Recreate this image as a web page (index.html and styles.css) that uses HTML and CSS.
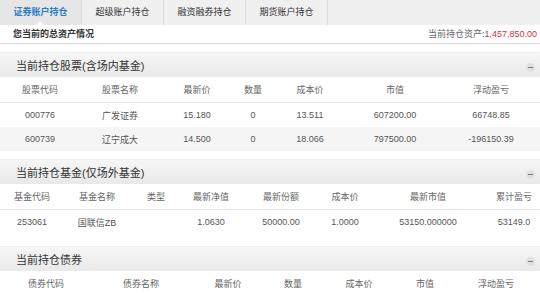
FILE: index.html
```html
<!DOCTYPE html>
<html lang="zh-CN">
<head>
    <meta charset="UTF-8">
    <title>账户持仓</title>
    <link rel="stylesheet" href="styles.css">
</head>
<body>
    <div class="tabs">
        <div class="tab active">证券账户持仓</div>
        <div class="tab">超级账户持仓</div>
        <div class="tab">融资融券持仓</div>
        <div class="tab">期货账户持仓</div>
    </div>

    <div class="summary">
        <span class="summary-title">您当前的总资产情况</span>
        <span class="summary-total">当前持仓资产:<em>1,457,850.00</em></span>
    </div>

    <div class="section">
        <div class="section-head">
            <span>当前持仓股票(含场内基金)</span>
            <i class="toggle"></i>
        </div>
        <table class="grid stock">
            <colgroup>
                <col style="width:80px"><col style="width:80px"><col style="width:74px"><col style="width:38px">
                <col style="width:76px"><col style="width:94px"><col>
            </colgroup>
            <tr><th>股票代码</th><th>股票名称</th><th>最新价</th><th>数量</th><th>成本价</th><th>市值</th><th>浮动盈亏</th></tr>
            <tr><td>000776</td><td>广发证券</td><td>15.180</td><td>0</td><td>13.511</td><td>607200.00</td><td>66748.85</td></tr>
            <tr class="alt"><td>600739</td><td>辽宁成大</td><td>14.500</td><td>0</td><td>18.066</td><td>797500.00</td><td>-196150.39</td></tr>
        </table>
    </div>

    <div class="section fund-section">
        <div class="section-head">
            <span>当前持仓基金(仅场外基金)</span>
            <i class="toggle"></i>
        </div>
        <table class="grid">
            <colgroup>
                <col style="width:64px"><col style="width:66px"><col style="width:52px"><col style="width:58px">
                <col style="width:82px"><col style="width:46px"><col style="width:120px"><col>
            </colgroup>
            <tr><th>基金代码</th><th>基金名称</th><th>类型</th><th>最新净值</th><th>最新份额</th><th>成本价</th><th>最新市值</th><th>累计盈亏</th></tr>
            <tr><td>253061</td><td>国联信ZB</td><td></td><td>1.0630</td><td>50000.00</td><td>1.0000</td><td>53150.000000</td><td>53149.0</td></tr>
        </table>
    </div>

    <div class="section">
        <div class="section-head">
            <span>当前持仓债券</span>
            <i class="toggle"></i>
        </div>
        <table class="grid">
            <colgroup>
                <col style="width:92px"><col style="width:98px"><col style="width:76px"><col style="width:54px">
                <col style="width:78px"><col style="width:54px"><col>
            </colgroup>
            <tr><th>债券代码</th><th>债券名称</th><th>最新价</th><th>数量</th><th>成本价</th><th>市值</th><th>浮动盈亏</th></tr>
        </table>
    </div>
</body>
</html>
```

FILE: styles.css
```css
body {
    margin: 0;
    width: 540px;
    font-family: "Liberation Sans", "Noto Sans CJK SC", sans-serif;
    font-size: 9px;
    color: #555;
    background: #fff;
}
.tabs {
    display: flex;
    height: 25px;
    background: #f0f0f0;
}
.tab {
    position: relative;
    width: 81px;
    line-height: 25px;
    text-align: center;
    color: #333;
    border-right: 1px solid #dcdcdc;
}
.tab.active {
    background: #e6e6e6;
    color: #2b7ac4;
    font-weight: bold;
}
.tab.active:after {
    content: "";
    position: absolute;
    left: 36px;
    bottom: 0;
    border: 4px solid transparent;
    border-bottom: 4px solid #fff;
    border-top: 0;
}
.summary {
    display: flex;
    justify-content: space-between;
    height: 18px;
    line-height: 18px;
    padding: 0 3px 0 13px;
    border-bottom: 1px solid #dedede;
    box-shadow: 0 1px 2px rgba(0,0,0,0.04);
}
.summary-title {
    font-weight: bold;
    color: #333;
}
.summary-total {
    color: #666;
}
.summary-total em {
    font-style: normal;
    color: #d9303a;
}
.section {
    margin-top: 8px;
}
.fund-section {
    margin-bottom: 12px;
}
.section-head {
    display: flex;
    justify-content: space-between;
    align-items: center;
    height: 24px;
    padding: 0 5px 0 16px;
    background: linear-gradient(#f6f6f6, #e9e9e9);
    border-top: 1px solid #eeeeee;
    font-size: 11px;
    color: #333;
}
.toggle {
    position: relative;
    width: 9px;
    height: 9px;
    border-radius: 50%;
    background: #e0e0e0;
    margin-top: 4px;
}
.toggle:after {
    content: "";
    position: absolute;
    left: 2px;
    top: 4px;
    width: 5px;
    height: 1px;
    background: #777;
}
.grid {
    width: 100%;
    table-layout: fixed;
    border-collapse: collapse;
}
.grid th {
    height: 25px;
    padding: 0;
    font-weight: normal;
    color: #666;
    text-align: center;
    border-bottom: 1px solid #e4e4e4;
}
.grid td {
    height: 24px;
    padding: 0;
    text-align: center;
    white-space: nowrap;
}
.grid tr.alt td {
    background: #f5f5f5;
}
```
